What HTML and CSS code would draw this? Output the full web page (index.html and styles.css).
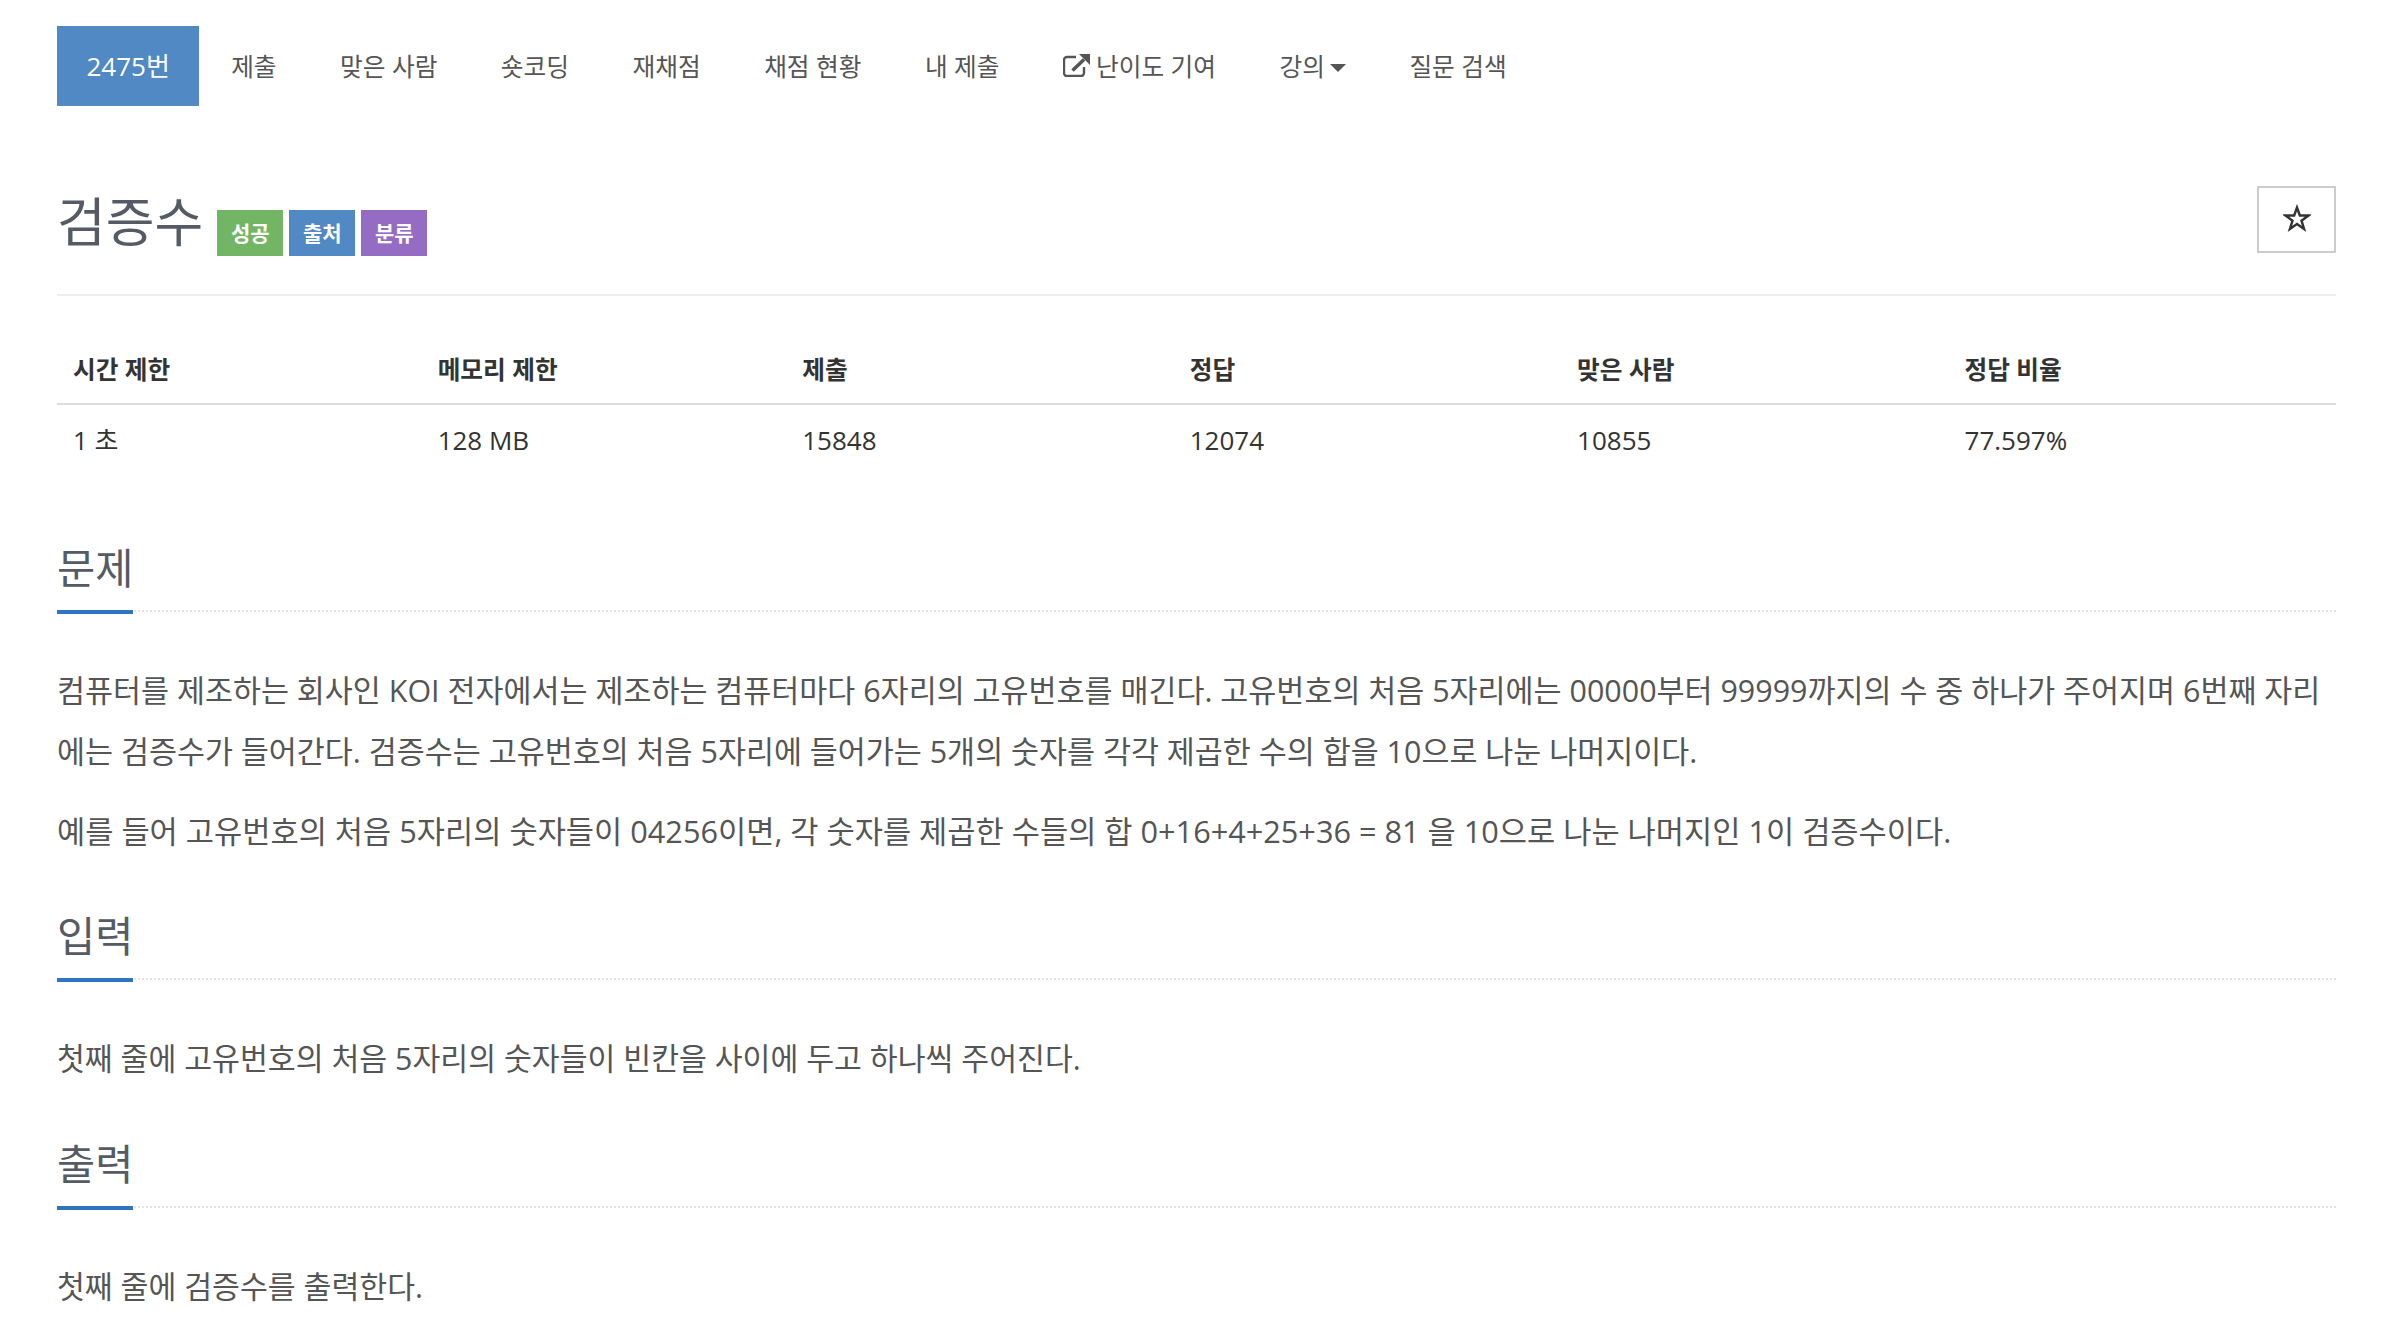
FILE: index.html
```html
<!DOCTYPE html>
<html lang="ko">
<head>
  <meta charset="UTF-8" />
  <title>검증수</title>
  <link rel="stylesheet" href="styles.css">
</head>
<body>
  <nav class="tabs">
    <a class="tab active">2475번</a>
    <a class="tab">제출</a>
    <a class="tab">맞은 사람</a>
    <a class="tab">숏코딩</a>
    <a class="tab">재채점</a>
    <a class="tab">채점 현황</a>
    <a class="tab">내 제출</a>
    <a class="tab">
      <svg class="ext-icon" viewBox="0 0 27 23"><path d="M21 13v6a3 3 0 0 1-3 3H4a3 3 0 0 1-3-3V6a3 3 0 0 1 3-3h9" fill="none" stroke="currentColor" stroke-width="2.400"/><path d="M16 0h11v11z" fill="currentColor"/><path d="M9.500 16.500L21 5.500" fill="none" stroke="currentColor" stroke-width="3.500"/></svg>
      난이도 기여
    </a>
    <a class="tab">강의<span class="caret"></span></a>
    <a class="tab">질문 검색</a>
  </nav>

  <div class="title-row">
    <h1 class="title">검증수</h1>
    <span class="label green">성공</span>
    <span class="label blue">출처</span>
    <span class="label purple">분류</span>
    <button class="star-btn">
      <svg class="star" viewBox="0 0 28 28"><path d="M14 3.500l2.800 8h8.700l-7 5.200 2.600 8.300-7.100-5-7.100 5 2.600-8.300-7-5.200h8.700z" fill="none" stroke="currentColor" stroke-width="2.400"/></svg>
    </button>
  </div>

  <div class="info-table">
    <div class="th">시간 제한</div>
    <div class="th">메모리 제한</div>
    <div class="th">제출</div>
    <div class="th">정답</div>
    <div class="th">맞은 사람</div>
    <div class="th">정답 비율</div>
    <div class="td">1 초</div>
    <div class="td">128 MB</div>
    <div class="td">15848</div>
    <div class="td">12074</div>
    <div class="td">10855</div>
    <div class="td">77.597%</div>
  </div>

  <section class="section first">
    <div class="headline"><h2>문제</h2></div>
    <p>컴퓨터를 제조하는 회사인 KOI 전자에서는 제조하는 컴퓨터마다 6자리의 고유번호를 매긴다. 고유번호의 처음 5자리에는 00000부터 99999까지의 수 중 하나가 주어지며 6번째 자리에는 검증수가 들어간다. 검증수는 고유번호의 처음 5자리에 들어가는 5개의 숫자를 각각 제곱한 수의 합을 10으로 나눈 나머지이다.</p>
    <p>예를 들어 고유번호의 처음 5자리의 숫자들이 04256이면, 각 숫자를 제곱한 수들의 합 0+16+4+25+36 = 81 을 10으로 나눈 나머지인 1이 검증수이다.</p>
  </section>

  <section class="section">
    <div class="headline"><h2>입력</h2></div>
    <p>첫째 줄에 고유번호의 처음 5자리의 숫자들이 빈칸을 사이에 두고 하나씩 주어진다.</p>
  </section>

  <section class="section">
    <div class="headline"><h2>출력</h2></div>
    <p>첫째 줄에 검증수를 출력한다.</p>
  </section>
</body>
</html>
```

FILE: styles.css
```css
body {
  margin: 0;
  padding: 26px 56px 0 57px;
  background: #fff;
  color: #333;
  font-family: "Open Sans", "Noto Sans CJK KR", sans-serif;
  height: 1314px;
  overflow: hidden;
}

.tabs {
  display: flex;
  height: 80px;
}

.tab {
  display: flex;
  align-items: center;
  padding: 0 31.750px 2px;
  font-size: 24.700px;
  color: #555;
}

.tab.active {
  background: #5189c4;
  color: #fff;
  padding: 0 29.500px 2px;
  font-size: 26px;
}

.ext-icon {
  width: 27px;
  height: 23px;
  margin-right: 6px;
}

.caret {
  display: inline-block;
  margin: 6px 0 0 5px;
  border-top: 8px solid #555;
  border-left: 8px solid transparent;
  border-right: 8px solid transparent;
}

.title-row {
  display: flex;
  align-items: flex-end;
  gap: 6px;
  height: 110px;
  margin-top: 80px;
  padding-bottom: 38px;
  box-sizing: border-box;
  border-bottom: 2px solid #eee;
  position: relative;
}

.title {
  margin: 0 8px 0 0;
  font-size: 53px;
  font-weight: 400;
  line-height: 69px;
  color: #555b65;
}

.label {
  width: 66px;
  height: 46px;
  padding-bottom: 2px;
  box-sizing: border-box;
  display: flex;
  align-items: center;
  justify-content: center;
  font-size: 21px;
  font-weight: 700;
  color: #fff;
}

.green { background: #72b565; }
.blue { background: #5189c4; }
.purple { background: #956cc4; }

.star-btn {
  position: absolute;
  right: 0;
  top: 0;
  width: 79px;
  height: 67px;
  padding: 0 0 4px;
  background: #fff;
  border: 2px solid #ccc;
  color: #333;
}

.star {
  display: block;
  width: 28px;
  height: 28px;
  margin: 0 auto;
}

.info-table {
  display: grid;
  grid-template-columns: 16% 16% 17% 17% 17% 17%;
  margin-top: 36px;
  font-size: 26px;
}

.th {
  padding: 0 16px;
  height: 71px;
  line-height: 76px;
  font-size: 24.700px;
  font-weight: 700;
  border-bottom: 2px solid #ddd;
}

.td {
  padding: 0 16px;
  height: 68px;
  line-height: 70px;
}

.section {
  margin-top: 47px;
}

.section.first {
  margin-top: 67px;
}

.headline {
  border-bottom: 2px dotted #e4e4e4;
  height: 70px;
}

.headline h2 {
  display: inline-block;
  margin: 0;
  height: 70px;
  font-size: 41.500px;
  font-weight: 400;
  line-height: 56px;
  color: #555b65;
  border-bottom: 4px solid #2f74bd;
}

.section p {
  margin: 48px 0 0;
  font-size: 30.300px;
  line-height: 61px;
  color: #555;
}

.section.first p {
  font-size: 30.450px;
}

.section.first p + p {
  margin: 19px 0 -1px;
  font-size: 30.680px;
}
```
